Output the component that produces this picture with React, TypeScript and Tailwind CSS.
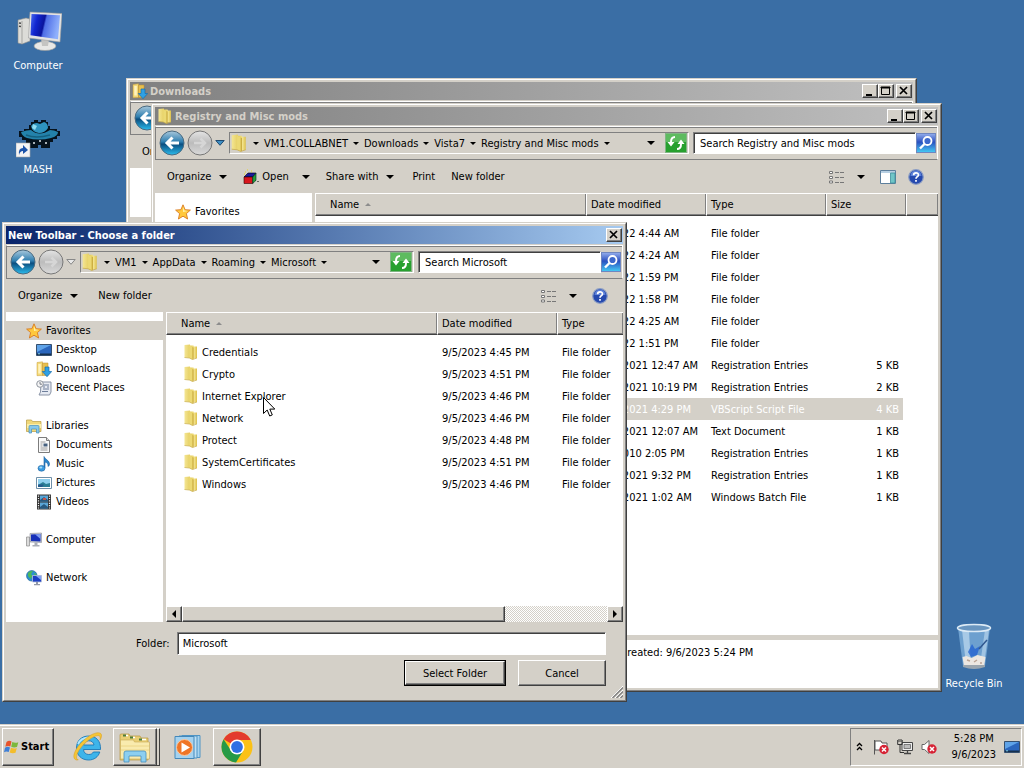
import type { ReactNode } from "react";
import clsx from "clsx";

const raised =
  "border border-t-white border-l-white border-r-[#404040] border-b-[#404040] bg-[#d4d0c8] shadow-[inset_-1px_-1px_0_#808080]";
const sunken =
  "border border-t-[#808080] border-l-[#808080] border-r-white border-b-white shadow-[inset_1px_1px_0_#404040]";

/* ---------- icons ---------- */

function FolderIcon({ className = "h-4 w-4" }: { className?: string }) {
  return (
    <svg viewBox="0 0 16 16" className={clsx("shrink-0", className)} aria-hidden>
      <defs>
        <linearGradient id="leafBack" x1="0" y1="0" x2="1" y2="0">
          <stop offset="0" stopColor="#f4e694" />
          <stop offset="1" stopColor="#e6cf62" />
        </linearGradient>
        <linearGradient id="leafFront" x1="0" y1="0" x2="1" y2="0">
          <stop offset="0" stopColor="#e2c84f" />
          <stop offset=".6" stopColor="#f3e38c" />
          <stop offset="1" stopColor="#dcc04a" />
        </linearGradient>
      </defs>
      <path d="M1.500 1 7 .5V14l-5.500-.5z" fill="url(#leafBack)" />
      <path d="M7 1.500h3.500l.5 1h3v11.500L8 15z" fill="url(#leafFront)" />
      <path d="M6.300 1.500 9.500 3v12.500L6.300 14z" fill="#ecd973" />
      <path d="M9.500 3v12.500l1-.3V3.500z" fill="#c4a437" />
      <path d="M1.500 13.500 6.300 14l3.200 1.500 4.500-1.500" fill="none" stroke="#c9ad4c" strokeWidth=".7" />
    </svg>
  );
}

function DownloadsIcon() {
  return (
    <svg viewBox="0 0 16 16" className="h-4 w-4 shrink-0" aria-hidden>
      <path d="M1 1.500 6.500.8v13.700L1 14.700z" fill="#f3d978" stroke="#c89c3b" strokeWidth=".5" />
      <path d="M6.500 2H12v12.500H6.500z" fill="#e8c04e" stroke="#bd8f33" strokeWidth=".5" />
      <path d="M2.300 3h2.500v9.500H2.300z" fill="#fff3bf" />
      <path d="M9 6h4v4.500h2.700L11 15.700 6.300 10.500H9z" fill="#2fa0e4" stroke="#186fae" strokeWidth=".7" />
    </svg>
  );
}

function StarIcon() {
  return (
    <svg viewBox="0 0 16 16" className="h-4 w-4 shrink-0" aria-hidden>
      <path
        d="m8 .8 2.100 4.900 5.300.4-4 3.500 1.200 5.400L8 12.200 3.400 15l1.200-5.400-4-3.500 5.300-.4z"
        fill="#ffc83c"
        stroke="#d97a20"
        strokeWidth=".9"
      />
      <path d="m8 3 1.400 3.600 3.400.3L8 8z" fill="#fff0a8" />
    </svg>
  );
}

function DesktopIcon() {
  return (
    <svg viewBox="0 0 16 16" className="h-4 w-4 shrink-0" aria-hidden>
      <path d="M.5 2.500h15v11H.5z" fill="#2b66bd" stroke="#36506f" />
      <path d="M1 3h14L1 10z" fill="#5fa3e8" />
      <path d="M1 11.500h14V13H1z" fill="#16314f" />
      <path d="M2 11.800h2" stroke="#7fd1e8" />
    </svg>
  );
}

function RecentIcon() {
  return (
    <svg viewBox="0 0 16 16" className="h-4 w-4 shrink-0" aria-hidden>
      <path d="M5 2h10v10l-1.500 3H3l1.500-3z" fill="#e6eaf2" stroke="#8993a6" />
      <path d="M7 5h6M7 7h2m2 0h2M7 9h6M6 11.500h6" stroke="#6f7f9b" />
      <circle cx="4" cy="4" r="3.300" fill="#f5f5f5" stroke="#8f959f" />
      <path d="M4 2v2.200h2" fill="none" stroke="#59616e" strokeWidth=".8" />
    </svg>
  );
}

function LibrariesIcon() {
  return (
    <svg viewBox="0 0 16 16" className="h-4 w-4 shrink-0" aria-hidden>
      <path d="M.5 2h5l1 1.500h8.500v10H.5z" fill="#f0d87a" stroke="#b99b3f" strokeWidth=".7" />
      <path d="M1 6h14v4H1z" fill="#fbeea8" />
      <path d="M3 15V8.500q0-1 1-1h8q1 0 1 1V15h-2.500v-4h-5v4z" fill="#86c8ec" stroke="#4690be" strokeWidth=".7" />
    </svg>
  );
}

function DocumentIcon() {
  return (
    <svg viewBox="0 0 16 16" className="h-4 w-4 shrink-0" aria-hidden>
      <path d="M2.500.5h8l3 3v12h-11z" fill="#fafafa" stroke="#7c7c7c" />
      <path d="M10.500.5v3h3" fill="#ddd" stroke="#7c7c7c" />
      <path d="M4.500 5h5M4.500 7h2m-2 2h2m-2 2h7m-7 2h7" stroke="#9a9a9a" />
      <path d="M7.500 6.500h4v3h-4z" fill="#47617f" />
    </svg>
  );
}

function MusicIcon() {
  return (
    <svg viewBox="0 0 16 16" className="h-4 w-4 shrink-0" aria-hidden>
      <path d="M8 .5c1 3 5 3.500 5.500 7 .2 1.500-.5 2.500-1.500 3 .5-2.500-1-4-3-4.500V12H8z" fill="#2c86cc" stroke="#1b5f9d" strokeWidth=".6" />
      <ellipse cx="5.500" cy="12.300" rx="3.500" ry="2.900" fill="#3a9be0" stroke="#1b5f9d" strokeWidth=".6" />
      <ellipse cx="4.800" cy="11.500" rx="1.500" ry="1" fill="#a6dcf8" />
    </svg>
  );
}

function PicturesIcon() {
  return (
    <svg viewBox="0 0 16 16" className="h-4 w-4 shrink-0" aria-hidden>
      <path d="M.5 2.500h15v11H.5z" fill="#fff" stroke="#6f8fa8" />
      <path d="M2 4h12v8H2z" fill="#8fd0ee" />
      <path d="m2 10 5-3 3 2 4-1v4H2z" fill="#2c7f95" />
      <path d="M2 9.500h6L6 12H2z" fill="#255c8d" />
    </svg>
  );
}

function VideosIcon() {
  return (
    <svg viewBox="0 0 16 16" className="h-4 w-4 shrink-0" aria-hidden>
      <path d="M1 .5h14v15H1z" fill="#343434" />
      <path d="M4 1.500h8v6H4zm0 7h8v6H4z" fill="#5aa6d8" />
      <path d="m4 6 4-3 4 3v1.500H4zm0 7 4-3 4 3v1.500H4z" fill="#28597f" />
      <path d="M7 4h3v2H7z" fill="#c0524a" />
      <path d="M2.500 1.500v13m11-13v13" stroke="#eee" strokeWidth="1.200" strokeDasharray="1.200 1.200" />
    </svg>
  );
}

function SmallComputerIcon() {
  return (
    <svg viewBox="0 0 16 16" className="h-4 w-4 shrink-0" aria-hidden>
      <path d="M.5 5h3v9h-3z" fill="#dcdcdc" stroke="#8a8a8a" strokeWidth=".7" />
      <path d="M4 1.500 15.500 1v9.500L4 10z" fill="#c8cbd3" stroke="#868b98" strokeWidth=".6" />
      <path d="m5 2.500 9.500-.5v7.500L5 9z" fill="#1730b8" />
      <path d="m9 2.300 5.500-.3v5z" fill="#7f9cf0" />
      <path d="M8.500 10.500h3V13h2v1.500h-7V13h2z" fill="#a9adb6" />
    </svg>
  );
}

function NetworkIcon() {
  return (
    <svg viewBox="0 0 16 16" className="h-4 w-4 shrink-0" aria-hidden>
      <circle cx="5.800" cy="5.800" r="5.300" fill="#2c8fd0" stroke="#1d5f94" strokeWidth=".6" />
      <path d="M2 3q2-2.500 5-2L5 4l1.500 2-2 3L2 6zm6 0 2.500 1-1 3z" fill="#4cb85a" />
      <path d="M6.500 5.500h9v6.500h-9z" fill="#1c3fc4" stroke="#b9c3da" strokeWidth=".8" />
      <path d="M10 6h5v4z" fill="#7fa2f5" />
      <path d="M10 12h2v2h2v1.300H8V14h2z" fill="#9299a8" />
    </svg>
  );
}

function OpenIcon() {
  return (
    <svg viewBox="0 0 16 16" className="h-4 w-4 shrink-0" aria-hidden>
      <path d="M1 8 5 4h8l-3 4z" fill="#1a1a9c" stroke="#000" strokeWidth=".6" />
      <path d="M1 8h8.700v6.500H1z" fill="#d8151c" stroke="#300" strokeWidth=".6" />
      <path d="M9.700 8 13 4.300v7l-3.300 3.200z" fill="#23a03a" stroke="#022" strokeWidth=".6" />
      <path d="M2 3h1m1-2h1m3 1h1M1 5h1" stroke="#e8d820" />
      <path d="M14.500 12.500h1" stroke="#000" />
    </svg>
  );
}

function Caret({ small = false }: { small?: boolean }) {
  return (
    <svg viewBox="0 0 8 4" className={clsx("shrink-0", small ? "h-[3px] w-[6px]" : "h-1 w-2")} aria-hidden>
      <path d="M0 0h8L4 4z" fill="#000" />
    </svg>
  );
}

function BackIcon() {
  return (
    <svg viewBox="0 0 26 26" className="h-[26px] w-[26px] shrink-0" aria-hidden>
      <defs>
        <linearGradient id="back" x1="0" y1="0" x2="0" y2="1">
          <stop offset="0" stopColor="#a9c8dc" />
          <stop offset=".45" stopColor="#2f7fb0" />
          <stop offset=".55" stopColor="#0c4f80" />
          <stop offset="1" stopColor="#2bbcee" />
        </linearGradient>
      </defs>
      <circle cx="13" cy="13" r="12" fill="url(#back)" stroke="#4a6a80" />
      <path d="M20 13H8m5.500-5.500L8 13l5.500 5.500" fill="none" stroke="#fff" strokeWidth="3" />
    </svg>
  );
}

function ForwardIcon() {
  return (
    <svg viewBox="0 0 26 26" className="h-[26px] w-[26px] shrink-0" aria-hidden>
      <defs>
        <linearGradient id="fwd" x1="0" y1="0" x2="0" y2="1">
          <stop offset="0" stopColor="#e4e4e4" />
          <stop offset=".5" stopColor="#bcbcbc" />
          <stop offset="1" stopColor="#dadada" />
        </linearGradient>
      </defs>
      <circle cx="13" cy="13" r="12" fill="url(#fwd)" stroke="#777" />
      <path d="M7 13h11m-4.500-4.500L18 13l-4.500 4.500" fill="none" stroke="#d6d6d6" strokeWidth="2.500" />
    </svg>
  );
}

function RefreshIcon() {
  return (
    <svg viewBox="0 0 20 18" className="h-full w-full" aria-hidden>
      <path d="M0 0h20v18H0z" fill="#27a02f" />
      <path d="M0 0h20v8H0z" fill="#5dbb5f" />
      <path d="M9 3q-4 0-4 5M11 15q4 0 4-5" fill="none" stroke="#fff" strokeWidth="2" />
      <path d="M1.500 8h7L5 12.500zM11.500 10h7L15 5.500z" fill="#fff" />
    </svg>
  );
}

function SearchIcon() {
  return (
    <svg viewBox="0 0 18 18" className="h-full w-full" aria-hidden>
      <defs>
        <linearGradient id="srch" x1="0" y1="0" x2="0" y2="1">
          <stop offset="0" stopColor="#8fa9ea" />
          <stop offset=".45" stopColor="#2a50c0" />
          <stop offset="1" stopColor="#43c6f2" />
        </linearGradient>
      </defs>
      <path d="M0 0h18v18H0z" fill="url(#srch)" />
      <circle cx="10.500" cy="7" r="4" fill="#3c68cc" stroke="#fff" strokeWidth="1.800" />
      <path d="m7.500 10-4.500 4.500" stroke="#fff" strokeWidth="2.400" />
    </svg>
  );
}

function ViewIcon() {
  return (
    <svg viewBox="0 0 16 14" className="h-[14px] w-4" aria-hidden>
      <path d="M.5 1.500h3v2h-3zm0 5h3v2h-3zm0 4.500h3v2h-3z" fill="#fff" stroke="#777" />
      <path d="M6 2.500h4m1 0h4M6 7.500h4m1 0h4M6 12.500h4m1 0h4" stroke="#777" />
    </svg>
  );
}

function PreviewIcon() {
  return (
    <svg viewBox="0 0 16 14" className="h-[14px] w-4" aria-hidden>
      <path d="M.5.5h15v13H.5z" fill="#fff" stroke="#5d7f9c" />
      <path d="M1 1h14v2H1z" fill="#b7cfe2" />
      <path d="M10.500 3h4.500v10h-4.500z" fill="#6fc5c7" stroke="#3c8f9c" strokeWidth=".8" />
    </svg>
  );
}

function HelpIcon() {
  return (
    <svg viewBox="0 0 16 16" className="h-4 w-4" aria-hidden>
      <circle cx="8" cy="8" r="7.300" fill="#2549ae" stroke="#8b9dc4" strokeWidth="1.200" />
      <path d="M2.500 7a5.500 5.500 0 0 1 11 0z" fill="#5c80d8" />
      <path d="M5.600 6.200c0-3.200 4.900-3.100 4.900-.3C10.500 7.700 8 7.700 8 9.800M8 11v1.700" fill="none" stroke="#fff" strokeWidth="1.700" />
    </svg>
  );
}

function ComputerIcon() {
  return (
    <svg viewBox="0 0 48 44" className="h-11 w-12" aria-hidden>
      <defs>
        <linearGradient id="scr" x1="0" y1="0" x2="1" y2=".2">
          <stop offset="0" stopColor="#4a6cf0" />
          <stop offset=".25" stopColor="#1226d0" />
          <stop offset=".5" stopColor="#0a149c" />
          <stop offset=".56" stopColor="#4f6ee6" />
          <stop offset="1" stopColor="#8fb0fc" />
        </linearGradient>
      </defs>
      <path d="m4 10 8-2 4 1v22l-8 3-4-1z" fill="#dcdcd8" stroke="#8f8f8c" strokeWidth=".6" />
      <path d="M8 11v23" stroke="#a5a5a2" />
      <path d="m5 13 2 .3m-2 3 2 .3" stroke="#4c4c4c" strokeWidth="1.500" />
      <ellipse cx="31" cy="36" rx="11" ry="4.500" fill="#e8e8e6" stroke="#989896" strokeWidth=".6" />
      <path d="m27 28 8 1-1 7h-6z" fill="#c4c4c2" />
      <path d="M16 2 48 3.500 46 32 14.500 28z" fill="#e4e4e4" stroke="#9a9a9a" strokeWidth=".6" />
      <path d="m17.500 4 28.500 1.300-2 24-27.500-4z" fill="url(#scr)" />
    </svg>
  );
}

function HatIcon() {
  return (
    <svg viewBox="0 0 44 44" className="h-11 w-11" aria-hidden>
      <path
        d="M13 11h2V8h3V6h4v2h3V6h5v2h2v4h2v3h7v2h3v5h-3v3h-4v3h-3v6h-9v-3h-3v3h-8v-5h-4v-3H6v-3H3v-6h5v-2h5z"
        fill="#06121c"
      />
      <path d="M5 18q6-2 10-2 8 7 19 0 4 0 8 2 0 4-7 6-12 3-24 0-5-2-6-6z" fill="#2382ab" />
      <path d="M15 12q2-3 6-3l3 1 4-2q4 1 4 6-3 5-9 5-7-1-8-7z" fill="#2e93bf" />
      <path d="m17 10 4 2-2 4-3-2z" fill="#8fdcf0" />
      <path d="M10 21q10 4 24 0" fill="none" stroke="#14607f" strokeWidth="1.500" />
      <path d="M17 29h2m4-2h2m4 2h2" stroke="#dde3e6" strokeWidth="1.500" />
      <path d="M0 29h14v14H0z" fill="#f4f4f4" stroke="#aaa" strokeWidth=".6" />
      <path d="M3 41q-1-7 4-7v-3l5 5-5 4v-3q-3 0-4 4z" fill="#1c53a8" />
    </svg>
  );
}

function RecycleIcon() {
  return (
    <svg viewBox="0 0 44 50" className="h-[50px] w-11" aria-hidden>
      <path d="m6 6 5 38q11 5 22 0l5-38z" fill="#7fb1de" opacity=".75" />
      <path d="m10 8 4 34 5 2L17 9z" fill="#cfe5f5" opacity=".6" />
      <path d="m33 8-5 35 4-1 5-34z" fill="#c3dcf0" opacity=".6" />
      <path d="m16 30 4-8 3 5 5-3-3 9-6 2z" fill="#1f5fd0" opacity=".75" />
      <path d="m35 18-8 9" stroke="#2f578f" strokeWidth="1.500" />
      <path d="m10.500 35 4-1 5 2 6-3 8 2-1.200 8q-10 4-20.500 0z" fill="#ece7e1" />
      <path d="m15 38 3 1m4 1 3-2m3 3h2" stroke="#bba394" strokeWidth="1.500" />
      <path d="M11 43h22v2q-11 4-22 0z" fill="#9aa5ae" />
      <ellipse cx="22" cy="6" rx="16.500" ry="3.500" fill="#6995bf" stroke="#dceaf5" strokeWidth="1.500" />
    </svg>
  );
}

/* ---------- window parts ---------- */

function CaptionButton({ label, children }: { label: string; children: ReactNode }) {
  return (
    <button type="button" aria-label={label} className={clsx(raised, "flex h-[14px] w-4 items-center justify-center")}>
      <svg viewBox="0 0 12 10" className="h-[10px] w-3" aria-hidden>
        {children}
      </svg>
    </button>
  );
}

type WindowProps = {
  title: string;
  icon?: ReactNode;
  active?: boolean;
  className: string;
  children: ReactNode;
};

function Window({ title, icon, active = false, className, children }: WindowProps) {
  return (
    <section
      aria-label={title}
      className={clsx("absolute border border-t-[#d4d0c8] border-l-[#d4d0c8] border-r-[#404040] border-b-[#404040]", className)}
    >
      <div className="flex h-full flex-col border border-t-white border-l-white border-r-[#808080] border-b-[#808080] bg-[#d4d0c8] p-[2px]">
        <header
          className={clsx(
            "mb-px flex h-[18px] shrink-0 items-center gap-[2px] bg-linear-to-r pr-px pl-[2px] text-[11px] font-bold",
            active ? "from-[#0a246a] to-[#a6caf0] text-white" : "from-[#808080] to-[#c0c0c0] text-[#d4d0c8]",
          )}
        >
          {icon}
          <h2 className="flex-1 truncate">{title}</h2>
          {!active && (
            <div className="flex">
              <CaptionButton label="Minimize">
                <path d="M2 8h6v2H2z" />
              </CaptionButton>
              <CaptionButton label="Maximize">
                <path d="M1.500 1.500h8v7h-8zM1 1h9v1H1z" fill="none" stroke="#000" />
              </CaptionButton>
            </div>
          )}
          <CaptionButton label="Close">
            <path d="m2 1 7 7m0-7L2 8" stroke="#000" strokeWidth="1.700" />
          </CaptionButton>
        </header>
        {children}
      </div>
    </section>
  );
}

function NavBar({ path, search, active = false }: { path: string[]; search: string; active?: boolean }) {
  return (
    <nav className="flex h-[34px] shrink-0 items-center border border-t-white border-l-[#808080] border-r-white border-b-[#808080] pr-px pl-[3px] shadow-[inset_0_1px_0_#808080]">
      <button type="button" aria-label="Back">
        <BackIcon />
      </button>
      <button type="button" aria-label="Forward" className="ml-[2px]">
        <ForwardIcon />
      </button>
      <button type="button" aria-label="Recent locations" className="ml-[2px]">
        <svg viewBox="0 0 10 6" className="h-[6px] w-[10px]" aria-hidden>
          <path d="M.8.5h8.400L5 5.300z" fill={active ? "#e8e8e8" : "#3f8fc4"} stroke={active ? "#888" : "#1f4a70"} />
        </svg>
      </button>
      <div className="ml-1 flex h-[22px] min-w-0 flex-1 items-center border border-t-[#808080] border-l-[#808080] border-r-white border-b-white pr-px">
        <FolderIcon className="h-[18px] w-[18px]" />
        <ol className="ml-[2px] flex flex-1 items-center">
          <li className="flex w-3 justify-center">
            <Caret small />
          </li>
          {path.map((part) => (
            <li key={part} className="flex items-center">
              <a href="#path" className="px-[2px]">
                {part}
              </a>
              <button type="button" aria-label={`Open ${part}`} className="flex w-3 justify-center">
                <Caret small />
              </button>
            </li>
          ))}
        </ol>
        <button type="button" aria-label="Previous locations" className="mr-[10px]">
          <Caret />
        </button>
        <button type="button" aria-label="Refresh" className="h-5 w-[22px] border border-[#7fb582]">
          <RefreshIcon />
        </button>
      </div>
      <input
        type="search"
        aria-label={search}
        placeholder={search}
        className={clsx(
          sunken,
          "ml-1 h-[22px] bg-white px-[6px] pt-px outline-none placeholder:text-black",
          active ? "w-[183px]" : "w-[223px]",
        )}
      />
      <button type="button" aria-label="Search" className="h-5 w-5 border border-[#6f86c0]">
        <SearchIcon />
      </button>
    </nav>
  );
}

function ToolbarButton({ children, menu = false }: { children: ReactNode; menu?: boolean }) {
  return (
    <button type="button" className="flex items-center gap-2">
      {children}
      {menu && <Caret />}
    </button>
  );
}

function SortMark() {
  return (
    <svg viewBox="0 0 6 3" className="h-[3px] w-[6px]" aria-hidden>
      <path d="M0 3h6L3 0z" fill="#8c8c8c" />
    </svg>
  );
}

const headCell =
  "h-[23px] border-t border-b border-l border-t-white border-b-[#404040] border-l-white bg-[#d4d0c8] px-1 py-0 text-left font-normal shadow-[inset_-1px_-1px_0_#808080]";

/* ---------- dialog ---------- */

const tree = [
  {
    name: "Favorites",
    icon: <StarIcon />,
    items: [
      { name: "Desktop", icon: <DesktopIcon /> },
      { name: "Downloads", icon: <DownloadsIcon /> },
      { name: "Recent Places", icon: <RecentIcon /> },
    ],
  },
  {
    name: "Libraries",
    icon: <LibrariesIcon />,
    items: [
      { name: "Documents", icon: <DocumentIcon /> },
      { name: "Music", icon: <MusicIcon /> },
      { name: "Pictures", icon: <PicturesIcon /> },
      { name: "Videos", icon: <VideosIcon /> },
    ],
  },
  { name: "Computer", icon: <SmallComputerIcon />, items: [] },
  { name: "Network", icon: <NetworkIcon />, items: [] },
];

const folders = [
  { name: "Credentials", date: "9/5/2023 4:45 PM" },
  { name: "Crypto", date: "9/5/2023 4:51 PM" },
  { name: "Internet Explorer", date: "9/5/2023 4:46 PM" },
  { name: "Network", date: "9/5/2023 4:46 PM" },
  { name: "Protect", date: "9/5/2023 4:48 PM" },
  { name: "SystemCertificates", date: "9/5/2023 4:51 PM" },
  { name: "Windows", date: "9/5/2023 4:46 PM" },
];

function FolderDialog() {
  return (
    <Window title="New Toolbar - Choose a folder" active className="top-[222px] left-[2px] h-[480px] w-[625px]">
      <NavBar path={["VM1", "AppData", "Roaming", "Microsoft"]} search="Search Microsoft" active />
      <div className="flex h-[33px] shrink-0 items-center gap-5 pr-[15px] pl-3">
        <ToolbarButton menu>Organize</ToolbarButton>
        <ToolbarButton>New folder</ToolbarButton>
        <div className="ml-auto flex items-center gap-[15px]">
          <button type="button" aria-label="Change view" className="flex items-center gap-3">
            <ViewIcon />
            <Caret />
          </button>
          <button type="button" aria-label="Help">
            <HelpIcon />
          </button>
        </div>
      </div>
      <div className="flex min-h-0 flex-1">
        <ul className="flex w-[157px] shrink-0 flex-col gap-[19px] bg-white pt-[9px]">
          {tree.map((group) => (
            <li key={group.name}>
              <a
                href="#tree"
                className={clsx("flex h-[19px] items-center gap-1 pl-5", group.name === "Favorites" && "bg-[#d4d0c8]")}
              >
                {group.icon}
                {group.name}
              </a>
              <ul>
                {group.items.map((item) => (
                  <li key={item.name}>
                    <a href="#tree" className="flex h-[19px] items-center gap-1 pl-[30px]">
                      {item.icon}
                      {item.name}
                    </a>
                  </li>
                ))}
              </ul>
            </li>
          ))}
        </ul>
        <div className="ml-[3px] flex min-w-0 flex-1 flex-col bg-white">
          <div className="min-h-0 flex-1 overflow-hidden">
            <table className="w-full table-fixed border-separate border-spacing-0">
              <colgroup>
                <col className="w-[271px]" />
                <col className="w-[120px]" />
                <col />
              </colgroup>
              <thead>
                <tr>
                  <th className={headCell}>
                    <span className="flex items-center gap-[6px] pl-[10px]">
                      Name <SortMark />
                    </span>
                  </th>
                  <th className={headCell}>Date modified</th>
                  <th className={headCell}>Type</th>
                </tr>
              </thead>
              <tbody className="before:block before:h-[6px] before:content-['']">
                {folders.map((folder) => (
                  <tr key={folder.name} className="h-[22px] whitespace-nowrap">
                    <td className="py-0 pr-1 pl-[17px]">
                      <span className="flex items-center gap-[3px]">
                        <FolderIcon />
                        {folder.name}
                      </span>
                    </td>
                    <td className="px-[5px] py-0">{folder.date}</td>
                    <td className="px-[5px] py-0">File folder</td>
                  </tr>
                ))}
              </tbody>
            </table>
          </div>
          <div className="flex h-4 shrink-0 bg-[repeating-conic-gradient(#fff_0_25%,#d4d0c8_0_50%)] bg-size-[2px_2px]">
            <button type="button" aria-label="Scroll left" className={clsx(raised, "flex w-4 items-center justify-center")}>
              <svg viewBox="0 0 4 8" className="h-2 w-1" aria-hidden>
                <path d="M4 0v8L0 4z" />
              </svg>
            </button>
            <div className={clsx(raised, "w-[323px]")} />
            <button
              type="button"
              aria-label="Scroll right"
              className={clsx(raised, "ml-auto flex w-4 items-center justify-center")}
            >
              <svg viewBox="0 0 4 8" className="h-2 w-1" aria-hidden>
                <path d="M0 0v8l4-4z" />
              </svg>
            </button>
          </div>
        </div>
      </div>
      <form className="relative shrink-0 pt-[10px] pr-[17px] pb-3 pl-[130px]" onSubmit={(e) => e.preventDefault()}>
        <div className="flex items-center gap-[7px]">
          <label htmlFor="folder">Folder:</label>
          <input id="folder" defaultValue="Microsoft" className={clsx(sunken, "h-[23px] min-w-0 flex-1 bg-white px-[5px] outline-none")} />
        </div>
        <div className="mt-[5px] flex justify-end gap-3">
          <button type="submit" className="border border-black">
            <span className={clsx(raised, "flex h-6 w-[100px] items-center justify-center")}>Select Folder</span>
          </button>
          <button type="button" className={clsx(raised, "h-[26px] w-[88px]")}>
            Cancel
          </button>
        </div>
        <svg viewBox="0 0 12 12" className="absolute right-0 bottom-0 h-3 w-3" aria-hidden>
          <path d="M0 12 12 0M4 12l8-8M8 12l4-4" stroke="#fff" />
          <path d="M1.500 12 12 1.500M5.500 12 12 5.500M9.500 12 12 9.500" stroke="#808080" strokeWidth="1.300" />
        </svg>
      </form>
    </Window>
  );
}

/* ---------- explorer windows ---------- */

const files = [
  { name: "Themes", date: "9/5/2022 4:44 AM", type: "File folder", size: "" },
  { name: "Icons", date: "9/5/2022 4:24 AM", type: "File folder", size: "" },
  { name: "Sounds", date: "9/5/2022 1:59 PM", type: "File folder", size: "" },
  { name: "Cursors", date: "9/5/2022 1:58 PM", type: "File folder", size: "" },
  { name: "Scripts", date: "9/5/2022 4:25 AM", type: "File folder", size: "" },
  { name: "Tools", date: "9/5/2022 1:51 PM", type: "File folder", size: "" },
  { name: "Menu", date: "10/15/2021 12:47 AM", type: "Registration Entries", size: "5 KB" },
  { name: "Shell", date: "10/15/2021 10:19 PM", type: "Registration Entries", size: "2 KB" },
  { name: "Run", date: "10/15/2021 4:29 PM", type: "VBScript Script File", size: "4 KB", selected: true },
  { name: "Notes", date: "10/15/2021 12:07 AM", type: "Text Document", size: "1 KB" },
  { name: "Explorer", date: "10/5/2010 2:05 PM", type: "Registration Entries", size: "1 KB" },
  { name: "Taskbar", date: "10/15/2021 9:32 PM", type: "Registration Entries", size: "1 KB" },
  { name: "Restart", date: "10/15/2021 1:02 AM", type: "Windows Batch File", size: "1 KB" },
];

function RegistryWindow() {
  return (
    <Window
      title="Registry and Misc mods"
      icon={<FolderIcon />}
      className="top-[103px] left-[151px] h-[589px] w-[791px]"
    >
      <NavBar path={["VM1.COLLABNET", "Downloads", "Vista7", "Registry and Misc mods"]} search="Search Registry and Misc mods" />
      <div className="flex h-[33px] shrink-0 items-center pr-[14px] pl-3">
        <div className="flex items-center gap-4">
          <ToolbarButton menu>Organize</ToolbarButton>
          <button type="button" className="flex items-center gap-[3px]">
            <OpenIcon />
            Open
            <span className="ml-[10px]">
              <Caret />
            </span>
          </button>
          <ToolbarButton menu>Share with</ToolbarButton>
          <div className="flex gap-4 pl-[2px]">
            <ToolbarButton>Print</ToolbarButton>
            <ToolbarButton>New folder</ToolbarButton>
          </div>
        </div>
        <div className="ml-auto flex items-center">
          <button type="button" aria-label="Change view" className="flex items-center gap-3">
            <ViewIcon />
            <Caret />
          </button>
          <button type="button" aria-label="Preview pane" className="ml-[15px]">
            <PreviewIcon />
          </button>
          <button type="button" aria-label="Help" className="ml-3">
            <HelpIcon />
          </button>
        </div>
      </div>
      <div className="flex min-h-0 flex-1">
        <div className="w-[157px] shrink-0 bg-white pt-[9px]">
          <a href="#favorites" className="flex h-[19px] items-center gap-1 pl-5">
            <StarIcon />
            Favorites
          </a>
        </div>
        <div className="ml-[3px] min-w-0 flex-1 overflow-hidden bg-white">
          <table className="w-full table-fixed border-separate border-spacing-0">
            <colgroup>
              <col className="w-[271px]" />
              <col className="w-[120px]" />
              <col className="w-[120px]" />
              <col className="w-[80px]" />
              <col />
            </colgroup>
            <thead>
              <tr>
                <th className={headCell}>
                  <span className="flex items-center gap-[6px] pl-[10px]">
                    Name <SortMark />
                  </span>
                </th>
                <th className={headCell}>Date modified</th>
                <th className={headCell}>Type</th>
                <th className={headCell}>Size</th>
                <td className={headCell} />
              </tr>
            </thead>
            <tbody className="before:block before:h-[6px] before:content-['']">
              {files.map((file) => (
                <tr
                  key={file.name}
                  className={clsx("h-[22px] whitespace-nowrap", file.selected && "text-white *:not-last:bg-[#d4d0c8]")}
                >
                  <td className="py-0 pl-9">{file.name}</td>
                  <td className="px-[5px] py-0">{file.date}</td>
                  <td className="px-[5px] py-0">{file.type}</td>
                  <td className="border-r-[3px] border-white bg-clip-padding py-0 pr-1 text-right">{file.size}</td>
                  <td className="p-0" />
                </tr>
              ))}
            </tbody>
          </table>
        </div>
      </div>
      <footer className="h-[53px] shrink-0 border-t-[5px] border-[#d4d0c8] bg-white pt-[5px] pl-[440px]">
        Date created: 9/6/2023 5:24 PM
      </footer>
    </Window>
  );
}

function DownloadsWindow() {
  return (
    <Window title="Downloads" icon={<DownloadsIcon />} className="top-[78px] left-[126px] h-[560px] w-[791px]">
      <NavBar path={["Downloads"]} search="Search Downloads" />
      <div className="flex h-[33px] shrink-0 items-center pl-3">
        <ToolbarButton menu>Organize</ToolbarButton>
      </div>
      <div className="flex-1 bg-white pt-[49px]">
        <div className="h-[19px] bg-[#d4d0c8]" />
      </div>
    </Window>
  );
}

/* ---------- desktop ---------- */

function Shortcut({ label, icon, className }: { label: string; icon: ReactNode; className: string }) {
  return (
    <button type="button" className={clsx("absolute flex w-[74px] flex-col items-center gap-1 whitespace-nowrap text-white", className)}>
      {icon}
      {label}
    </button>
  );
}

function Taskbar() {
  return (
    <footer className="relative flex h-11 shrink-0 items-center border-t border-[#d4d0c8] bg-[#d4d0c8] pr-[2px] pl-[2px] shadow-[inset_0_1px_0_#fff]">
      <button type="button" className={clsx(raised, "flex h-[38px] w-[52px] items-center gap-px pl-px text-[11px] font-bold")}>
        <svg viewBox="0 0 16 16" className="h-4 w-4 shrink-0" aria-hidden>
          <path d="M2.500 3q2.500-2 5-.5L6.300 7.500q-2.500-1.300-5 .3z" fill="#e8532a" />
          <path d="M8.300 3q3 1.500 6 .2L13 8q-3 1-5.800-.2z" fill="#7cb83d" />
          <path d="M1 8.700q2.500-1.600 5-.3L4.700 13q-2.500-1-4.700.3z" fill="#3f7fd6" />
          <path d="M7 8.700q3 1.300 5.800.2l-1.300 4.800q-3 1-5.800-.3z" fill="#f3bd2c" />
        </svg>
        Start
      </button>
      <button type="button" aria-label="Internet Explorer" className="ml-4 flex h-[38px] w-9 items-center justify-center">
        <svg viewBox="0 0 32 32" className="h-8 w-8" aria-hidden>
          <path
            d="M28.500 18.500H11.500c.3 3.300 2.500 5 5.200 5 2.200 0 3.800-.8 4.700-2.500h6.400c-1.600 5-5.700 8-11.300 8C9.500 29 4.500 24.200 4.500 17S9.500 5 16.700 5c7.600 0 12.200 5 11.800 13.500zM22 14c-.4-2.700-2.300-4.200-5.200-4.200-2.800 0-4.700 1.500-5.200 4.200z"
            fill="#3db4ea"
            stroke="#1c78b8"
            strokeWidth=".9"
          />
          <path d="M6 13q3-6 10-6.500" fill="none" stroke="#b4e7fb" strokeWidth="1.800" />
          <path d="M4 29C-1 27 3 17 12 9S29 0 29.500 4c.3 2-.8 4-1.500 5 .5-2.500.3-4.500-2-4.500C20 4.500 4 18 4.500 27q0 1.500 1.800 1.700-1.200.6-2.300.3z" fill="#f5c535" stroke="#d99a1e" strokeWidth=".5" />
        </svg>
      </button>
      <div className="ml-[7px] flex h-[38px]">
        <button type="button" aria-label="Explorer" className={clsx(raised, "flex w-11 items-center justify-center")}>
          <svg viewBox="0 0 34 32" className="h-8 w-[34px]" aria-hidden>
            <path d="M2 4q0-1 1-1h8l1 2h10l1 2h7v22H2z" fill="#e9cf74" stroke="#b8963f" strokeWidth=".7" />
            <path d="M5 4.500h3m4 2h3m6 2h3" stroke="#4b7c3e" strokeWidth="1.800" />
            <path d="M8 4.500h2m5 2h2m7 2h4" stroke="#fff" strokeWidth="1.500" />
            <path d="M2.500 9h13l1 2h15v17h-29z" fill="#f9ebae" stroke="#c8a955" strokeWidth=".6" />
            <path d="M3 15h28M3 19h28" stroke="#ecd688" />
            <path d="M6 31v-9q0-2 2-2h18q2 0 2 2v9h-5v-6H11v6z" fill="#8ccff0" stroke="#468fbe" strokeWidth=".8" />
          </svg>
        </button>
        <span className="w-[3px] border-t border-r border-b border-t-white border-r-[#404040] border-b-[#404040]" />
      </div>
      <button type="button" aria-label="Media Player" className="ml-2 flex h-[38px] w-10 items-center justify-center">
        <svg viewBox="0 0 28 26" className="h-[26px] w-7" aria-hidden>
          <path d="M8 1.500h18v22H8z" fill="#a7d3ef" stroke="#4f94c4" />
          <path d="M5 2h18v22H5z" fill="#bfe0f4" stroke="#4f94c4" />
          <path d="M1 2.500h19v22H1z" fill="#a4d2ef" stroke="#4488ba" />
          <circle cx="10.500" cy="13.500" r="8" fill="#ef7526" stroke="#f7c9a4" />
          <path d="m7.500 8.500 8.500 5-8.500 5z" fill="#fff" />
        </svg>
      </button>
      <button type="button" aria-label="Chrome" className={clsx(raised, "ml-[5px] flex h-[38px] w-12 items-center justify-center")}>
        <svg viewBox="0 0 32 32" className="h-8 w-8" aria-hidden>
          <circle cx="16" cy="16" r="15.500" fill="#fbc116" />
          <path d="M16 16 2.600 8.200A15.500 15.500 0 0 1 29.400 8.200L29.500 9H16z" fill="#e33b2e" />
          <path d="M2.600 8.200A15.500 15.500 0 0 0 15 31.500l7-11.500-6-4-6 3.500z" fill="#269a47" />
          <circle cx="16" cy="16" r="7.500" fill="#fff" />
          <circle cx="16" cy="16" r="5.900" fill="#2f6fe4" />
        </svg>
      </button>
      <div className="ml-auto flex h-[38px] items-center border border-t-[#808080] border-l-[#808080] border-r-white border-b-white pr-px pl-[5px]">
        <button type="button" aria-label="Show hidden icons">
          <svg viewBox="0 0 7 9" className="h-[9px] w-[7px]" aria-hidden>
            <path d="m1 4 2.500-2.500L6 4M1 8l2.500-2.500L6 8" fill="none" stroke="#000" strokeWidth="1.300" />
          </svg>
        </button>
        <div className="ml-[10px] flex items-center gap-2">
          <svg viewBox="0 0 16 16" className="h-4 w-4" aria-hidden>
            <path d="M1.500 1v14.500M2 2h6l1 2h5v7H2z" fill="#fff" stroke="#555" />
            <circle cx="11" cy="10.500" r="4.700" fill="#d62335" />
            <path d="m9 8.500 4 4m0-4-4 4" stroke="#fff" strokeWidth="1.500" />
          </svg>
          <svg viewBox="0 0 16 16" className="h-4 w-4" aria-hidden>
            <path d="M5 3.500h10.500v8H5z" fill="#eee" stroke="#444" />
            <path d="M7 5.500h6.500v4H7z" fill="#bbb" stroke="#666" strokeWidth=".8" />
            <path d="M7 14.500h7M10.500 12v2" stroke="#444" strokeWidth="1.300" />
            <path d="M.7 1v4.500h4.500V1M3 5.500v8h4M2 0v3m2-3v3" fill="none" stroke="#333" />
          </svg>
          <svg viewBox="0 0 16 16" className="h-4 w-4" aria-hidden>
            <path d="M1 5.500h2.500L8 1.500v13l-4.500-4H1z" fill="#fff" stroke="#666" />
            <circle cx="11" cy="10" r="4.700" fill="#d62335" />
            <path d="m9 8 4 4m0-4-4 4" stroke="#fff" strokeWidth="1.500" />
          </svg>
        </div>
        <time className="ml-[15px] text-center leading-4">
          5:28 PM
          <br />
          9/6/2023
        </time>
        <button type="button" aria-label="Show desktop" className="ml-2">
          <DesktopIcon />
        </button>
      </div>
    </footer>
  );
}

export default function App() {
  return (
    <div className="flex min-h-screen flex-col bg-[#3a6ea5] font-['DejaVu_Sans_Condensed','DejaVu_Sans',sans-serif] text-[11px] leading-[15px] text-black">
      <main className="relative flex-1 overflow-hidden">
        <Shortcut label="Computer" icon={<ComputerIcon />} className="top-[10px] left-px" />
        <Shortcut label="MASH" icon={<HatIcon />} className="top-[114px] left-px" />
        <Shortcut label="Recycle Bin" icon={<RecycleIcon />} className="right-[13px] bottom-[33px]" />
        <DownloadsWindow />
        <RegistryWindow />
        <FolderDialog />
        <svg viewBox="0 0 12 20" className="pointer-events-none absolute top-[397px] left-[263px] h-5 w-3" aria-hidden>
          <path d="M.5.5v16l3.700-3.500 2.500 6 2.600-1.100-2.500-5.800h5z" fill="#fff" stroke="#000" />
        </svg>
      </main>
      <Taskbar />
    </div>
  );
}
